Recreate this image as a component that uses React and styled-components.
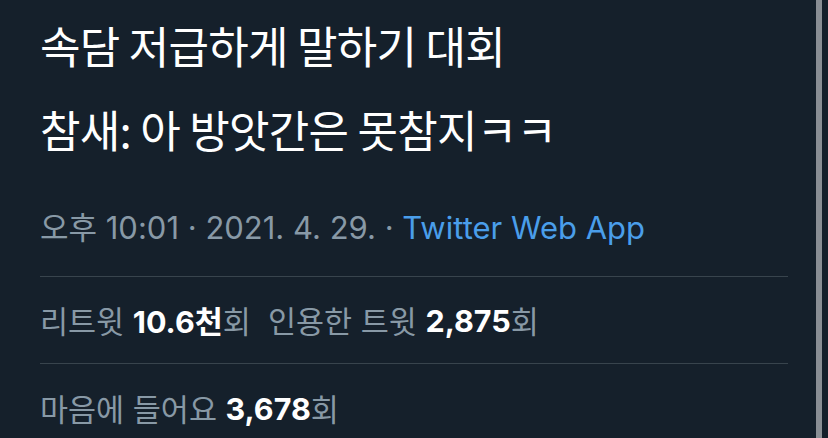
import styled, { createGlobalStyle } from "styled-components";

const GlobalStyle = createGlobalStyle`
  html, body {
    margin: 0;
    padding: 0;
    background: #15202b;
    overflow: hidden;
  }
`;

const Page = styled.div`
  display: flex;
  width: 828px;
  height: 438px;
  background: #15202b;
  overflow: hidden;
`;

const Main = styled.div`
  width: 748px;
  padding: 0 28px 0 40px;
  display: flex;
  flex-direction: column;
  & > * {
    flex-shrink: 0;
  }
`;

const ScrollTrack = styled.div`
  width: 6px;
  margin-right: 6px;
  background: #898e94;
`;

const TweetText = styled.div`
  padding-top: 3px;
  font-family: "Noto Sans CJK KR", sans-serif;
  font-size: 44px;
  color: #ffffff;
  letter-spacing: -0.7px;
`;

const Line = styled.div`
  line-height: 84px;
  height: 84px;
  white-space: nowrap;
`;

const MetaRow = styled.div`
  margin-top: 35px;
  margin-bottom: 26px;
  line-height: 44px;
  font-family: Inter, "Noto Sans CJK KR", sans-serif;
  font-size: 31px;
  color: #8899a6;
  white-space: nowrap;
`;

const Source = styled.span`
  color: #4a9eea;
`;

const Divider = styled.div`
  height: 1px;
  background: #38444d;
`;

const StatRow = styled.div`
  height: ${(p) => p.h}px;
  display: flex;
  align-items: center;
  font-family: Inter, "Noto Sans CJK KR", sans-serif;
  font-size: 30.5px;
  color: #8899a6;
  white-space: pre;
`;

const Num = styled.b`
  color: #ffffff;
  font-weight: 700;
`;

export default function App() {
  return (
    <>
      <GlobalStyle />
      <Page>
        <Main>
          <TweetText>
            <Line>속담 저급하게 말하기 대회</Line>
            <Line>참새: 아 방앗간은 못참지ㅋㅋ</Line>
          </TweetText>
          <MetaRow>
            오후 10:01 · 2021. 4. 29. · <Source>Twitter Web App</Source>
          </MetaRow>
          <Divider />
          <StatRow h={86}>
            리트윗 <Num>10.6천</Num>회{"  "}인용한 트윗 <Num>2,875</Num>회
          </StatRow>
          <Divider />
          <StatRow h={88}>
            마음에 들어요 <Num>3,678</Num>회
          </StatRow>
        </Main>
        <ScrollTrack />
      </Page>
    </>
  );
}
